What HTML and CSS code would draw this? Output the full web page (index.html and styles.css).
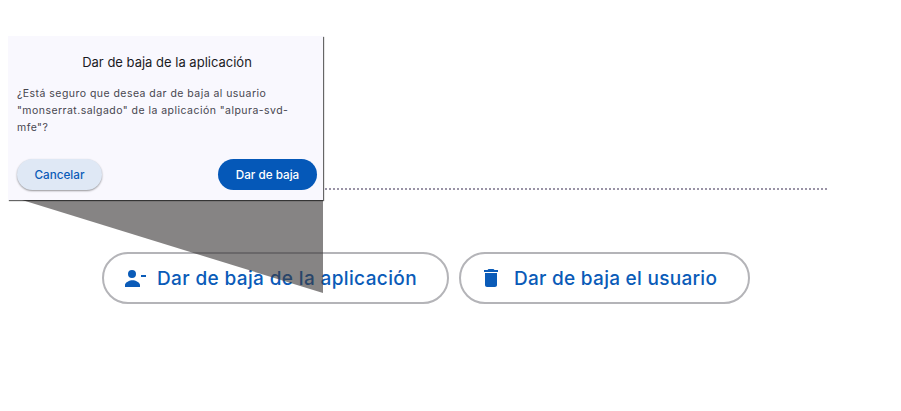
FILE: index.html
```html
<!DOCTYPE html>
<html lang="en">
<head>
    <meta charset="UTF-8">
    <title>Dar de baja</title>
    <link rel="stylesheet" href="styles.css">
</head>
<body>

<div class="page">
    <div class="divider"></div>
    <div class="actions">
        <button class="action-btn action-app">
            <svg class="action-icon" viewBox="0 0 24 24"><path d="M9 12a4 4 0 1 0 0-8 4 4 0 0 0 0 8zM2 21v-2c0-2.700 4.700-4.800 7.500-4.800S17 16.300 17 19v2zM18 9h5v2h-5z"/></svg>
            Dar de baja de la aplicación
        </button>
        <button class="action-btn action-user">
            <svg class="action-icon" viewBox="0 0 24 24"><path d="M6 19c0 1.100.9 2 2 2h8c1.100 0 2-.9 2-2V7H6zM19 4h-3.500l-1-1h-5l-1 1H5v2h14z"/></svg>
            Dar de baja el usuario
        </button>
    </div>
</div>

<!-- Shadow wedge under the dialog -->
<svg class="wedge" viewBox="0 0 301 93"><polygon points="0,0 301,0 301,93"/></svg>

<div class="dialog">
    <h2 class="dialog-title">Dar de baja de la aplicación</h2>
    <p class="dialog-text">¿Está seguro que desea dar de baja al usuario "monserrat.salgado" de la aplicación "alpura-svd-mfe"?</p>
    <div class="dialog-buttons">
        <button class="btn-cancel">Cancelar</button>
        <button class="btn-confirm">Dar de baja</button>
    </div>
</div>

</body>
</html>
```

FILE: styles.css
```css
body {
    font-family: Inter, "Open Sans", sans-serif;
    margin: 0;
    padding: 0;
    background-color: #fff;
    height: 411px;
    overflow: hidden;
}

.page {
    padding: 188px 74px 0 24px;
}

.divider {
    border-top: 2px dotted #9a93a6;
}

.actions {
    display: flex;
    gap: 10px;
    margin: 62px 0 0 78px;
}

.action-btn {
    display: flex;
    align-items: center;
    height: 52px;
    box-sizing: border-box;
    background: #fff;
    border: 2px solid #b4b4b8;
    border-radius: 26px;
    color: #0a5bb8;
    font-family: inherit;
    font-size: 19px;
    font-weight: 500;
    letter-spacing: 0.37px;
    white-space: nowrap;
}

.action-app {
    width: 347px;
    padding: 0 0 0 19px;
    gap: 10px;
}

.action-user {
    width: 291px;
    padding: 0 0 0 18px;
    gap: 11px;
    letter-spacing: 0.28px;
}

.action-icon {
    width: 24px;
    height: 24px;
    fill: #0a5bb8;
    flex-shrink: 0;
}

.wedge {
    position: absolute;
    left: 22px;
    top: 200px;
    width: 301px;
    height: 93px;
}

.wedge polygon {
    fill: rgba(60, 56, 56, 0.62);
}

.dialog {
    position: absolute;
    left: 8px;
    top: 36px;
    width: 315px;
    height: 164px;
    box-sizing: border-box;
    padding: 18px 6px 10px 9px;
    background-color: #f9f8fe;
    box-shadow: 1px 1px 1px rgba(0,0,0,0.6);
    display: flex;
    flex-direction: column;
}

.dialog-title {
    margin: 0 0 15px 0;
    font-size: 13px;
    line-height: 16px;
    font-weight: 400;
    text-align: center;
    color: #1b1b1f;
}

.dialog-text {
    margin: 0;
    font-size: 10.500px;
    line-height: 17px;
    letter-spacing: 0.46px;
    color: #47464f;
    padding-right: 20px;
}

.dialog-buttons {
    display: flex;
    justify-content: space-between;
    margin-top: auto;
}

.btn-cancel, .btn-confirm {
    height: 31px;
    border: none;
    border-radius: 16px;
    font-family: inherit;
    font-size: 11.700px;
    font-weight: 500;
}

.btn-cancel {
    width: 85px;
    background-color: #dfe8f5;
    color: #0a5bb8;
    box-shadow: 0 1px 2px rgba(0,0,0,0.4);
}

.btn-confirm {
    width: 99px;
    background-color: #0558b8;
    color: #fff;
}
```
